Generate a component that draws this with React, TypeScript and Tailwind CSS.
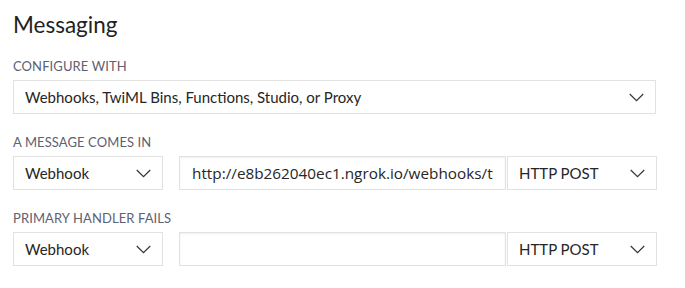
function Label({ children }: { children: React.ReactNode }) {
  return (
    <div className="text-[13px] leading-[14px] tracking-[0.1px] uppercase text-[#5e6170] mb-[7px]">
      {children}
    </div>
  );
}

function Chevron() {
  return (
    <svg width="15" height="9" viewBox="0 0 15 9" fill="none" className="shrink-0">
      <polyline points="0.75,1 7.5,7.75 14.25,1" stroke="#34343f" strokeWidth="1.2" />
    </svg>
  );
}

function Select({ value, className = "" }: { value: string; className?: string }) {
  return (
    <div
      className={`h-[34px] flex items-center justify-between border border-[#e2e2e2] bg-white pl-[11px] pr-[11px] text-[15px] text-[#262626] ${className}`}
    >
      <span>{value}</span>
      <Chevron />
    </div>
  );
}

function TextInput({ value = "" }: { value?: string }) {
  return (
    <input
      readOnly
      value={value}
      className="ml-[16px] w-[327px] h-[34px] border border-[#e2e2e2] shadow-[inset_0_1px_2px_rgba(0,0,0,0.07)] px-[12px] text-[15.3px] text-[#262626] outline-none font-['Open_Sans','DejaVu_Sans',sans-serif]"
    />
  );
}

export default function App() {
  return (
    <div className="w-[685px] h-[288px] bg-white px-[13px] pt-[12px] font-['Lato','Liberation_Sans',sans-serif]">
      <h2 className="text-[22.5px] leading-[26px] text-[#222] mb-[21px]">Messaging</h2>

      <Label>Configure with</Label>
      <Select value="Webhooks, TwiML Bins, Functions, Studio, or Proxy" className="w-[643px]" />

      <div className="mt-[21px]">
        <Label>A message comes in</Label>
        <div className="flex">
          <Select value="Webhook" className="w-[150px]" />
          <TextInput value="http://e8b262040ec1.ngrok.io/webhooks/twilio" />
          <Select value="HTTP POST" className="w-[150px] ml-[1px]" />
        </div>
      </div>

      <div className="mt-[21px]">
        <Label>Primary handler fails</Label>
        <div className="flex">
          <Select value="Webhook" className="w-[150px]" />
          <TextInput />
          <Select value="HTTP POST" className="w-[150px] ml-[1px]" />
        </div>
      </div>
    </div>
  );
}
